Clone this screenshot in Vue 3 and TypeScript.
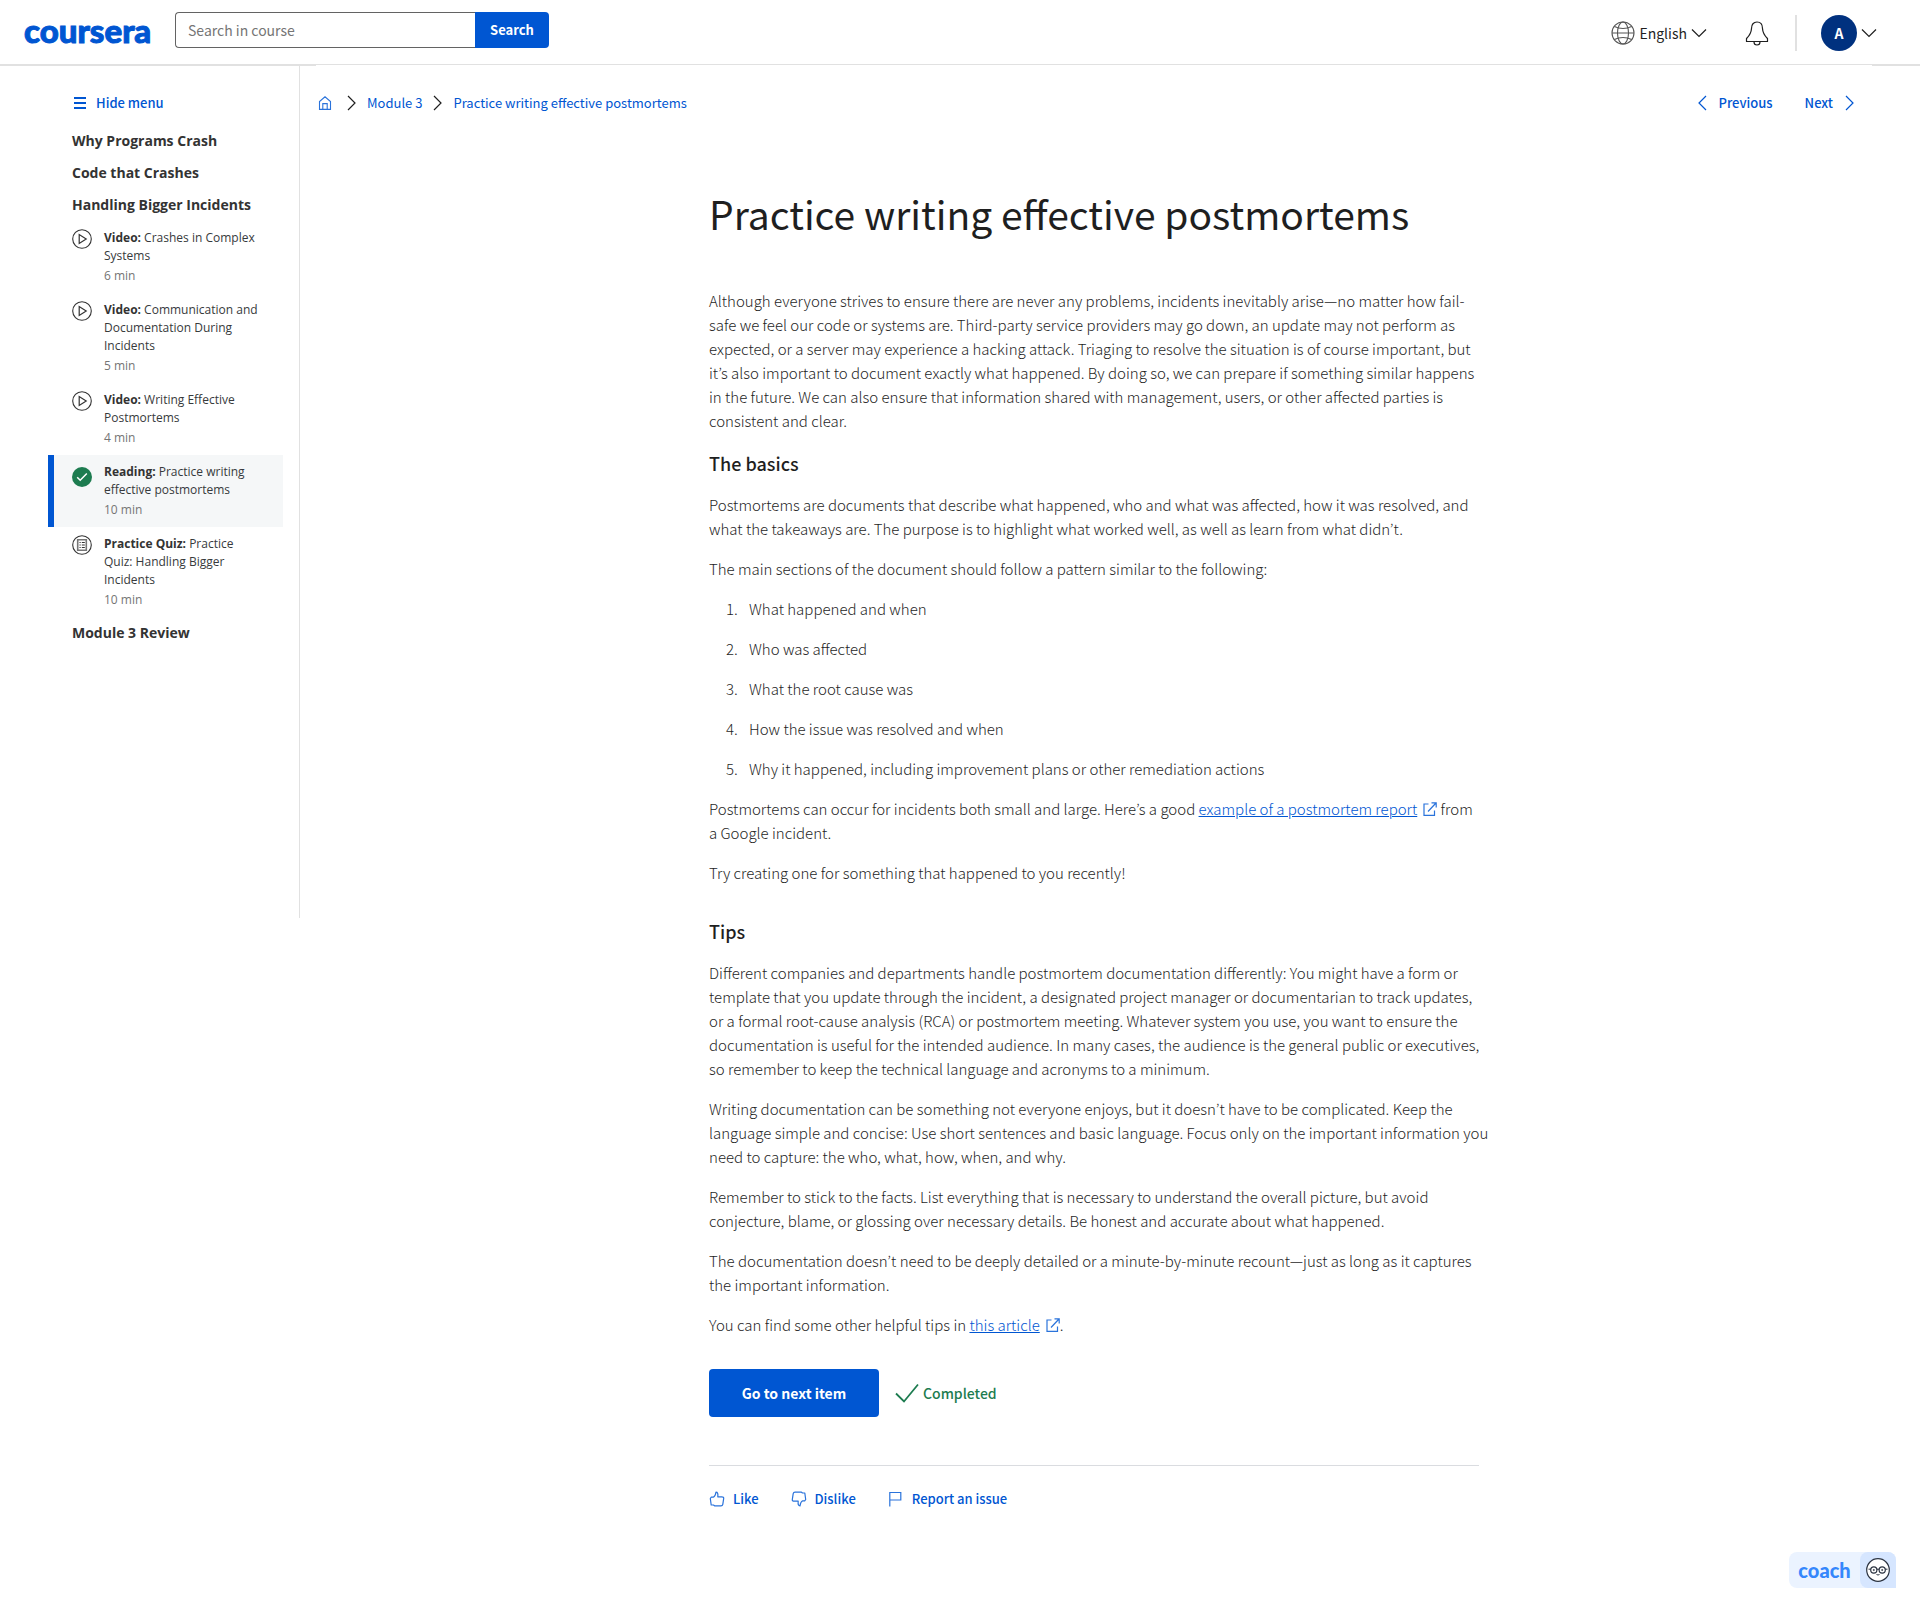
<script setup lang="ts">
import { ref } from 'vue'

interface CourseItem {
  kind: string
  title: string
  minutes: number
  icon: 'video' | 'done' | 'quiz'
  active?: boolean
}

const query = ref('')
const lessonsBefore: string[] = ['Why Programs Crash', 'Code that Crashes', 'Handling Bigger Incidents']
const items: CourseItem[] = [
  { kind: 'Video:', title: 'Crashes in Complex Systems', minutes: 6, icon: 'video' },
  { kind: 'Video:', title: 'Communication and Documentation During Incidents', minutes: 5, icon: 'video' },
  { kind: 'Video:', title: 'Writing Effective Postmortems', minutes: 4, icon: 'video' },
  { kind: 'Reading:', title: 'Practice writing effective postmortems', minutes: 10, icon: 'done', active: true },
  { kind: 'Practice Quiz:', title: 'Practice Quiz: Handling Bigger Incidents', minutes: 10, icon: 'quiz' },
]
const sections: string[] = [
  'What happened and when',
  'Who was affected',
  'What the root cause was',
  'How the issue was resolved and when',
  'Why it happened, including improvement plans or other remediation actions',
]
</script>

<template>
  <div class="page">
    <header class="topbar">
      <a class="logo" href="#">coursera</a>
      <form class="search" role="search" @submit.prevent>
        <input v-model="query" type="text" placeholder="Search in course" aria-label="Search in course" />
        <button type="submit">Search</button>
      </form>
      <div class="tools">
        <button class="language" type="button">
          <svg width="24" height="24" viewBox="0 0 24 24" fill="none" stroke="#555" stroke-width="1.1">
            <circle cx="12" cy="12" r="11" />
            <ellipse cx="12" cy="12" rx="5.5" ry="11" />
            <path d="M1 12h22M3.5 5.5c5 2.6 12 2.6 17 0M3.5 18.500c5-2.600 12-2.600 17 0" />
          </svg>
          <span>English</span>
          <svg width="16" height="16" viewBox="0 0 16 16" fill="none" stroke="#1f1f1f" stroke-width="1.2"><path d="M1 4.500l7 7 7-7" /></svg>
        </button>
        <button class="bell" type="button" aria-label="Notifications">
          <svg width="24" height="26" viewBox="0 0 24 26" fill="none" stroke="#1f1f1f" stroke-width="1.2" stroke-linejoin="round">
            <path d="M1.500 21.500v-3C4 16 6.200 14 6.500 8.500c0-4 2-6.500 5.500-6.500s5.500 2.500 5.500 6.500c.3 5.500 2.500 7.500 5 10v3zM9 22a3 3 0 0 0 6 0" />
          </svg>
        </button>
        <span class="divider"></span>
        <button class="account" type="button" aria-label="Account">
          <span class="avatar">A</span>
          <svg width="16" height="16" viewBox="0 0 16 16" fill="none" stroke="#1f1f1f" stroke-width="1.2"><path d="M1 4.500l7 7 7-7" /></svg>
        </button>
      </div>
    </header>

    <div class="body">
      <nav class="sidebar" aria-label="Course menu">
        <button class="hide-menu" type="button">
          <svg width="12" height="12" viewBox="0 0 12 12" fill="#0056d2"><path d="M0 0h12v2H0zM0 5h12v2H0zM0 10h12v2H0z" /></svg>
          <span>Hide menu</span>
        </button>
        <h3 v-for="lesson in lessonsBefore" :key="lesson">{{ lesson }}</h3>
        <ul>
          <li v-for="item in items" :key="item.title">
            <a href="#" class="item" :class="{ active: item.active }">
              <svg v-if="item.icon === 'video'" width="20" height="20" viewBox="0 0 20 20" fill="none" stroke="#333">
                <circle cx="10" cy="10" r="9.300" stroke-width="1.100" />
                <path d="M7.200 5.500v9l7-4.500z" stroke-width="1.200" />
              </svg>
              <svg v-else-if="item.icon === 'done'" class="done" width="20" height="20" viewBox="0 0 20 20" fill="none">
                <circle cx="10" cy="10" r="10" fill="#1d7c50" />
                <path d="M5.200 10.300l3 3 6.600-6.800" stroke="#fff" stroke-width="1.500" />
              </svg>
              <svg v-else width="20" height="20" viewBox="0 0 20 20" fill="none" stroke="#333">
                <circle cx="10" cy="10" r="9.300" stroke-width="1.100" />
                <path d="M5.700 4.700h8.600v10.600H5.700z" stroke="#777" stroke-width="1.600" />
                <path d="M7.500 7.500h1.200M7.500 10h1.200M7.500 12.500h1.200M9.800 7.500h3M9.800 10h3M9.800 12.500h3" />
              </svg>
              <span class="item-text">
                <span class="item-title"><strong>{{ item.kind }}</strong> {{ item.title }}</span>
                <span class="item-time">{{ item.minutes }} min</span>
              </span>
            </a>
          </li>
        </ul>
        <h3>Module 3 Review</h3>
      </nav>

      <main class="content">
        <div class="crumb-bar">
          <nav class="crumbs" aria-label="Breadcrumb">
            <a class="home" href="#" aria-label="Home">
              <svg width="14" height="14" viewBox="0 0 14 14" fill="none" stroke="#2a73db" stroke-width="1.100">
                <path d="M1.500 13.400V5.500L7 .8l5.500 4.700v7.900zM4.800 13.200V7.600h4.400v5.600" />
              </svg>
            </a>
            <svg width="9" height="16" viewBox="0 0 9 16" fill="none" stroke="#1f1f1f" stroke-width="1.200"><path d="M1 1l7 7-7 7" /></svg>
            <a href="#">Module 3</a>
            <svg width="9" height="16" viewBox="0 0 9 16" fill="none" stroke="#1f1f1f" stroke-width="1.200"><path d="M1 1l7 7-7 7" /></svg>
            <a href="#">Practice writing effective postmortems</a>
          </nav>
          <div class="pager">
            <a href="#">
              <svg width="9" height="16" viewBox="0 0 9 16" fill="none" stroke="#0056d2" stroke-width="1.200"><path d="M8 1L1 8l7 7" /></svg>
              <span>Previous</span>
            </a>
            <a href="#">
              <span>Next</span>
              <svg width="9" height="16" viewBox="0 0 9 16" fill="none" stroke="#0056d2" stroke-width="1.200"><path d="M1 1l7 7-7 7" /></svg>
            </a>
          </div>
        </div>

        <article>
          <h1>Practice writing effective postmortems</h1>
          <p>Although everyone strives to ensure there are never any problems, incidents inevitably arise—no matter how fail-<br />safe we feel our code or systems are. Third-party service providers may go down, an update may not perform as<br />expected, or a server may experience a hacking attack. Triaging to resolve the situation is of course important, but<br />it’s also important to document exactly what happened. By doing so, we can prepare if something similar happens<br />in the future. We can also ensure that information shared with management, users, or other affected parties is<br />consistent and clear.</p>
          <h2>The basics</h2>
          <p>Postmortems are documents that describe what happened, who and what was affected, how it was resolved, and<br />what the takeaways are. The purpose is to highlight what worked well, as well as learn from what didn’t.</p>
          <p>The main sections of the document should follow a pattern similar to the following:</p>
          <ol>
            <li v-for="section in sections" :key="section">{{ section }}</li>
          </ol>
          <p>Postmortems can occur for incidents both small and large. Here’s a good <a href="#">example of a postmortem report</a>
            <svg class="external" width="14" height="14" viewBox="0 0 14 14" fill="none" stroke="#2a73db" stroke-width="1.200"><path d="M5.500 2H1v11.300h10.500V8.500M8.500.8h4.700v4.700M13 1L5 9.500" /></svg>
            from<br />a Google incident.</p>
          <p>Try creating one for something that happened to you recently!</p>
          <h2 class="spaced">Tips</h2>
          <p>Different companies and departments handle postmortem documentation differently: You might have a form or<br />template that you update through the incident, a designated project manager or documentarian to track updates,<br />or a formal root-cause analysis (RCA) or postmortem meeting. Whatever system you use, you want to ensure the<br />documentation is useful for the intended audience. In many cases, the audience is the general public or executives,<br />so remember to keep the technical language and acronyms to a minimum.</p>
          <p>Writing documentation can be something not everyone enjoys, but it doesn’t have to be complicated. Keep the<br />language simple and concise: Use short sentences and basic language. Focus only on the important information you<br />need to capture: the who, what, how, when, and why.</p>
          <p>Remember to stick to the facts. List everything that is necessary to understand the overall picture, but avoid<br />conjecture, blame, or glossing over necessary details. Be honest and accurate about what happened.</p>
          <p>The documentation doesn’t need to be deeply detailed or a minute-by-minute recount—just as long as it captures<br />the important information.</p>
          <p>You can find some other helpful tips in <a href="#">this article</a>
            <svg class="external" width="14" height="14" viewBox="0 0 14 14" fill="none" stroke="#2a73db" stroke-width="1.200"><path d="M5.500 2H1v11.300h10.500V8.500M8.500.8h4.700v4.700M13 1L5 9.500" /></svg>.</p>

          <div class="actions">
            <button class="next" type="button">Go to next item</button>
            <span class="completed">
              <svg width="24" height="20" viewBox="0 0 24 20" fill="none" stroke="#1d7c50" stroke-width="1.800"><path d="M1 10.500l8 8L23 1.500" /></svg>
              <span>Completed</span>
            </span>
          </div>
          <div class="feedback">
            <button type="button">
              <svg width="16" height="16" viewBox="0 0 16 16" fill="none" stroke="#2a73db" stroke-width="1.200" stroke-linejoin="round">
                <path d="M1.300 7.500l1-1.300h2C6 5.500 6.700 3.500 7 1.200c1.500 0 2.200 1 1.800 4.600h4c1.500 0 2 .6 1.900 1.500l-.9 6c-.2 1-.8 1.500-1.800 1.500H5.500L4.500 14H2.200z" />
              </svg>
              <span>Like</span>
            </button>
            <button type="button">
              <svg width="16" height="16" viewBox="0 0 16 16" fill="none" stroke="#2a73db" stroke-width="1.200" stroke-linejoin="round">
                <path d="M14.700 8.500l-1 1.300h-2C10 10.500 9.300 12.500 9 14.800c-1.500 0-2.200-1-1.800-4.600h-4c-1.500 0-2-.6-1.900-1.500l.9-6c.2-1 .8-1.500 1.800-1.500h6.500l1 .8h2.300z" />
              </svg>
              <span>Dislike</span>
            </button>
            <button type="button">
              <svg width="16" height="16" viewBox="0 0 16 16" fill="none" stroke="#2a73db" stroke-width="1.200">
                <path d="M1.800 15.500V1.500h11v7.500h-11" />
              </svg>
              <span>Report an issue</span>
            </button>
          </div>
        </article>
      </main>
    </div>

    <button class="coach" type="button">
      <span class="coach-name">coach</span>
      <span class="coach-face">
        <svg width="24" height="24" viewBox="0 0 24 24" fill="none" stroke="#2c3442">
          <circle cx="12" cy="12" r="11.300" fill="#fff" stroke-width="1.200" />
          <circle cx="7.800" cy="12" r="3.100" stroke-width="1.200" />
          <circle cx="16.200" cy="12" r="3.100" stroke-width="1.200" />
          <path d="M2.500 11.200h2.300M10.800 11.500q1.200-.8 2.400 0M19.200 11.200h2.300M10.500 16.500q1.500 1 3 0" />
          <circle cx="7.800" cy="12" r=".6" />
          <circle cx="16.200" cy="12" r=".6" />
        </svg>
      </span>
    </button>
  </div>
</template>

<style>
body {
  margin: 0;
  background: #fff;
}
</style>

<style scoped>
* {
  box-sizing: border-box;
}
.page {
  position: relative;
  min-height: 100vh;
  color: #1f1f1f;
  font-family: 'Noto Sans CJK KR', sans-serif;
  font-size: 14px;
  line-height: 24px;
}
button {
  padding: 0;
  border: 0;
  background: none;
  color: inherit;
  font: inherit;
  cursor: pointer;
}
a {
  color: #0056d2;
  text-decoration: none;
}
svg {
  display: block;
  flex: none;
}
.topbar {
  display: flex;
  align-items: center;
  height: 66px;
  padding: 0 43px 0 24px;
  border-bottom: 2px solid #e1e1e1;
}
.logo {
  width: 127px;
  margin: 0 24px 4px 0;
  font: 900 33px/40px Lato, sans-serif;
  -webkit-text-stroke: 1px #0056d2;
}
.search {
  display: flex;
  height: 36px;
  margin-bottom: 4px;
}
.search input {
  width: 300px;
  padding: 0 12px;
  border: 1px solid #636363;
  border-right: 0;
  border-radius: 4px 0 0 4px;
  color: #1f1f1f;
  font: inherit;
}
.search input::placeholder {
  color: #757575;
  opacity: 1;
}
.search button {
  width: 74px;
  border-radius: 0 4px 4px 0;
  background: #0056d2;
  color: #fff;
  font-size: 13px;
  font-weight: 700;
}
.tools {
  display: flex;
  align-items: center;
  margin: 2px 0 0 auto;
}
.language {
  display: flex;
  align-items: center;
  gap: 4px;
}
.bell {
  margin-left: 38px;
}
.divider {
  width: 2px;
  height: 36px;
  margin: 0 24px 0 26px;
  background: #e1e1e1;
}
.account {
  display: flex;
  align-items: center;
  gap: 4px;
}
.avatar {
  width: 36px;
  border-radius: 50%;
  background: #00317f;
  color: #fff;
  font-weight: 700;
  line-height: 36px;
}
.body {
  display: flex;
  align-items: flex-start;
}
.sidebar {
  flex: none;
  width: 300px;
  min-height: 852px;
  padding: 24px 16px 0 48px;
  border-right: 1px solid #e1e1e1;
  font-family: 'Open Sans', sans-serif;
}
.hide-menu {
  display: flex;
  align-items: center;
  gap: 10px;
  margin: 0 0 10px 26px;
  color: #0056d2;
  font: 500 13px/25px 'Noto Sans CJK KR', sans-serif;
}
.sidebar h3 {
  margin: 0 0 0 24px;
  color: #333;
  font-size: 14px;
  font-weight: 700;
  line-height: 32px;
}
.sidebar ul {
  margin: 0;
  padding: 0;
  list-style: none;
}
.item {
  display: flex;
  gap: 12px;
  padding: 8px 24px 8px 18px;
  border-left: 6px solid transparent;
  font-size: 12px;
  line-height: 18px;
}
.item.active {
  border-left-color: #0056d2;
  background: #f5f7f8;
}
.item .done {
  margin-top: 4px;
}
.item-text {
  display: flex;
  flex-direction: column;
  gap: 2px;
}
.item-title {
  color: #373a3c;
}
.item-title strong {
  color: #333;
  font-weight: 700;
}
.item-time {
  color: #757575;
}
.content {
  flex: 1;
  margin: -1px 48px 0 16px;
  background: #fff;
}
.crumb-bar {
  display: flex;
  align-items: center;
  justify-content: space-between;
  padding: 26px 18px 0 2px;
  font-size: 13px;
}
.crumbs {
  display: flex;
  align-items: center;
  gap: 11px;
}
.home {
  padding-right: 4px;
}
.pager,
.pager a {
  display: flex;
  align-items: center;
}
.pager {
  gap: 32px;
  font-weight: 500;
}
.pager a {
  gap: 12px;
}
article {
  display: flex;
  flex-direction: column;
  gap: 16px;
  max-width: 770px;
  margin: 0 auto;
  padding: 70px 0 88px;
}
h1 {
  margin: 0 0 32px;
  font-size: 39px;
  font-weight: 400;
  line-height: 56px;
}
h2 {
  margin: 0;
  font-size: 18px;
  font-weight: 500;
  line-height: 28px;
}
h2.spaced {
  margin-top: 16px;
}
p,
ol {
  margin: 0;
  color: #1f1f1f;
  font-size: 15px;
  font-weight: 300;
  white-space: nowrap;
}
p a {
  text-decoration: underline;
}
ol {
  display: flex;
  flex-direction: column;
  gap: 16px;
  padding-left: 32px;
}
ol li {
  padding-left: 8px;
}
.external {
  display: inline-block;
  margin-left: 6px;
  vertical-align: -1px;
}
.actions {
  display: flex;
  align-items: center;
  gap: 16px;
  margin-top: 16px;
}
.next {
  width: 170px;
  border-radius: 4px;
  background: #0056d2;
  color: #fff;
  font-weight: 700;
  line-height: 48px;
}
.completed {
  display: flex;
  align-items: center;
  gap: 4px;
  color: #1d7c50;
  font-weight: 500;
}
.feedback {
  display: flex;
  gap: 32px;
  margin-top: 32px;
  padding-top: 21px;
  border-top: 1px solid #dadce0;
  color: #0056d2;
  font-size: 13px;
  font-weight: 500;
}
.feedback button {
  display: flex;
  align-items: center;
  gap: 8px;
}
.coach {
  position: absolute;
  right: 24px;
  bottom: 24px;
  display: flex;
  border-radius: 8px 8px 0 8px;
  background: #ebf3ff;
  color: #3587fc;
}
.coach-name {
  width: 71px;
  font: 900 20px/36px Lato, sans-serif;
}
.coach-face {
  display: flex;
  align-items: center;
  justify-content: center;
  width: 36px;
  height: 36px;
  border-radius: 8px 8px 0 8px;
  background: #d6e6ff;
}
</style>
